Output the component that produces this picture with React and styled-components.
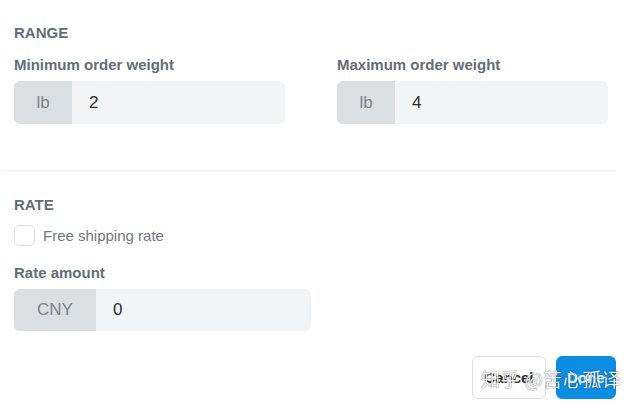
import React from 'react'
import styled, { createGlobalStyle } from 'styled-components'

const Global = createGlobalStyle`
  body {
    margin: 0;
    background: #fff;
    font-family: "Liberation Sans", Arial, sans-serif;
  }
`

const Page = styled.div`
  position: relative;
  width: 640px;
  height: 406px;
  overflow: hidden;
`

const Section = styled.section`
  padding: ${p => p.$pad};
`

const Heading = styled.div`
  font-size: 15px;
  font-weight: 700;
  color: #646d76;
  line-height: 17px;
  text-transform: uppercase;
`

const Label = styled.div`
  font-size: 15px;
  font-weight: 700;
  color: #646d76;
  line-height: 17px;
  margin-bottom: 8px;
`

const Row = styled.div`
  display: grid;
  grid-template-columns: 271px 271px;
  column-gap: 52px;
  margin-top: 15px;
`

const Field = styled.div``

const InputGroup = styled.div`
  display: flex;
  width: ${p => p.$width}px;
  height: ${p => p.$height}px;
  border-radius: 6px;
  overflow: hidden;
  background: #f3f4f6;
`

const Addon = styled.div`
  width: ${p => p.$width}px;
  flex: none;
  display: flex;
  align-items: center;
  justify-content: center;
  background: #dcdfe2;
  color: #7b838b;
  font-size: 17px;
`

const Value = styled.div`
  display: flex;
  align-items: center;
  padding-left: 17px;
  font-size: 17px;
  color: #2b2f33;
`

const Divider = styled.hr`
  margin: 0 24px 0 4px;
  border: none;
  border-top: 1px solid #eef0f2;
`

const CheckRow = styled.label`
  display: flex;
  align-items: center;
  gap: 8px;
  margin: 12px 0 18px;
  font-size: 15px;
  color: #6f7880;
`

const Box = styled.span`
  width: 21px;
  height: 21px;
  box-sizing: border-box;
  border: 1px solid #dcdfe2;
  border-radius: 5px;
  background: #fff;
`

const Footer = styled.div`
  display: flex;
  justify-content: flex-end;
  gap: 10px;
  padding: 25px 24px 0 0;
`

const Button = styled.button`
  height: 43px;
  padding: 0 ${p => p.$px}px;
  border-radius: 6px;
  font-family: inherit;
  font-size: 15px;
  font-weight: 700;
  border: 1px solid ${p => (p.$primary ? '#0b8de4' : '#dcdfe2')};
  background: ${p => (p.$primary ? '#0b8de4' : '#fff')};
  color: ${p => (p.$primary ? '#fff' : '#2b2f33')};
`

const Watermark = styled.div`
  position: absolute;
  left: 481px;
  top: 365px;
  font-family: "Noto Sans CJK SC", "Liberation Sans", sans-serif;
  font-size: 19px;
  color: rgba(255, 255, 255, 0.94);
  text-shadow: 0 0 1px rgba(0, 0, 0, 0.55), 0 0 2px rgba(0, 0, 0, 0.25);
  letter-spacing: 0.5px;
  pointer-events: none;
`

const App = () => {
  return (
    <Page>
      <Global />
      <Section $pad="24px 0 46px 14px">
        <Heading>Range</Heading>
        <Row>
          <Field>
            <Label>Minimum order weight</Label>
            <InputGroup $width={271} $height={43}>
              <Addon $width={58}>lb</Addon>
              <Value>2</Value>
            </InputGroup>
          </Field>
          <Field>
            <Label>Maximum order weight</Label>
            <InputGroup $width={271} $height={43}>
              <Addon $width={58}>lb</Addon>
              <Value>4</Value>
            </InputGroup>
          </Field>
        </Row>
      </Section>
      <Divider />
      <Section $pad="25px 0 0 14px">
        <Heading>Rate</Heading>
        <CheckRow>
          <Box />
          Free shipping rate
        </CheckRow>
        <Label>Rate amount</Label>
        <InputGroup $width={297} $height={42}>
          <Addon $width={82}>CNY</Addon>
          <Value>0</Value>
        </InputGroup>
      </Section>
      <Footer>
        <Button $px={11}>Cancel</Button>
        <Button $primary $px={10.5}>Done</Button>
      </Footer>
      <Watermark>知乎 @苦心孤译</Watermark>
    </Page>
  )
}

export default App
